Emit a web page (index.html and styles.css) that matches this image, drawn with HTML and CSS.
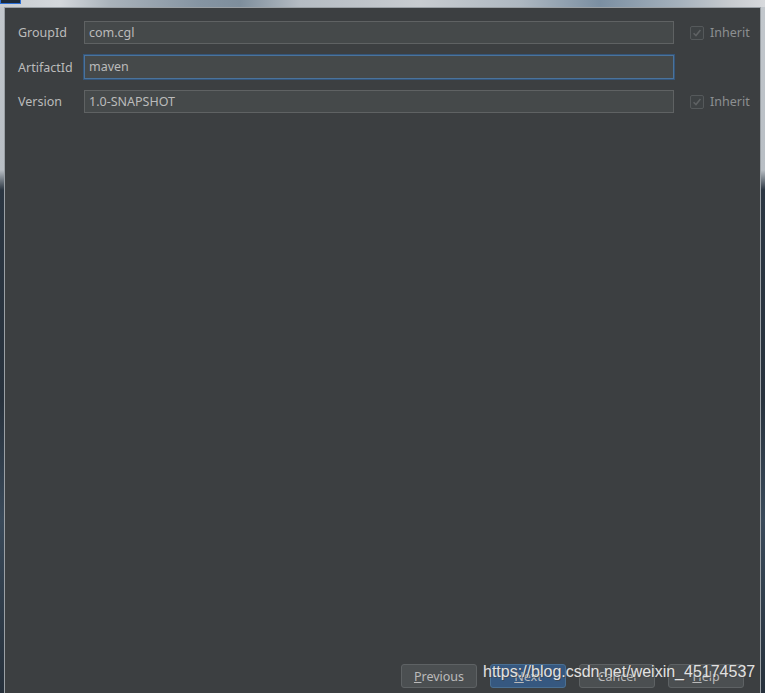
FILE: index.html
```html
<!DOCTYPE html>
<html>
<head>
<meta charset="utf-8">
<link rel="stylesheet" href="styles.css">
</head>
<body>
<div class="topstrip"><span class="tab"></span></div>
<div class="dialog">
  <div class="form">
    <label class="lbl">GroupId</label>
    <div class="field">com.cgl</div>
    <div class="inherit"><span class="cb"><svg viewBox="0 0 14 14" width="14" height="14"><path d="M3 7.2 L5.8 10 L11 3.6" fill="none" stroke="#5f6264" stroke-width="1.8"/></svg></span>Inherit</div>

    <label class="lbl">ArtifactId</label>
    <div class="field focused">maven</div>
    <div class="inherit empty"></div>

    <label class="lbl">Version</label>
    <div class="field">1.0-SNAPSHOT</div>
    <div class="inherit"><span class="cb"><svg viewBox="0 0 14 14" width="14" height="14"><path d="M3 7.2 L5.8 10 L11 3.6" fill="none" stroke="#5f6264" stroke-width="1.8"/></svg></span>Inherit</div>
  </div>
  <div class="spacer"></div>
  <div class="footer">
    <button class="btn"><u>P</u>revious</button>
    <button class="btn primary"><u>N</u>ext</button>
    <button class="btn">Cancel</button>
    <button class="btn"><u>H</u>elp</button>
  </div>
</div>
<div class="watermark">https://blog.csdn.net/weixin_45174537</div>
</body>
</html>
```

FILE: styles.css
```css
html, body {
  margin: 0;
  padding: 0;
  width: 765px;
  height: 693px;
  overflow: hidden;
}
body {
  position: relative;
  font-family: "Noto Sans", "Liberation Sans", sans-serif;
  font-size: 12.5px;
  background:
    linear-gradient(to bottom, #c3c8cd 0px, #b8bec4 170px, #2b3642 190px, #28323d 400px, #3a4a5a 520px, #26303b 693px);
}
.topstrip {
  height: 7px;
  background: linear-gradient(to right, #c9cdd1 0px, #d4d8dc 60px, #aab3bb 110px, #8594a2 200px, #7e8e9c 240px, #b5bcc3 300px, #c8ccd0 420px, #aeb8c1 520px, #7b8fa2 600px, #a6b2bd 680px, #c7cbcf 730px, #d8dadd 765px);
  position: relative;
}
.tab {
  position: absolute;
  left: 0;
  top: 0;
  width: 19px;
  height: 3px;
  background: #1e2b3a;
  border: 1px solid #2b6fd6;
  border-top: none;
}
.dialog {
  margin-left: 4px;
  width: 755px;
  height: 685px;
  border: 1px solid #9aa0a5;
  border-bottom: none;
  background: #3c3f41;
  display: flex;
  flex-direction: column;
}
.form {
  display: grid;
  grid-template-columns: 66px 590px auto;
  column-gap: 0;
  row-gap: 11px;
  padding: 13px 0 0 13px;
  align-items: center;
}
.lbl {
  color: #bbbbbb;
  line-height: 23px;
}
.field {
  height: 21px;
  line-height: 21px;
  border: 1px solid #5f6263;
  background: #45494a;
  color: #bbbbbb;
  padding-left: 4px;
  box-sizing: content-box;
  width: 584px;
}
.field.focused {
  border-color: #4a739c;
  box-shadow: 0 0 0 1px #34557a;
  height: 22px;
  line-height: 22px;
}
.inherit {
  display: flex;
  align-items: center;
  color: #8c8f91;
  gap: 6px;
  margin-left: 16px;
}
.cb {
  width: 12px;
  height: 12px;
  border: 1px solid #55595b;
  border-radius: 2px;
  background: #3e4244;
  display: inline-flex;
  align-items: center;
  justify-content: center;
}
.cb svg {
  width: 12px;
  height: 12px;
}
.spacer {
  flex: 1;
}
.footer {
  display: flex;
  justify-content: flex-end;
  gap: 13px;
  padding: 0 16px 5px 0;
}
.btn {
  width: 76px;
  height: 24px;
  font-family: "Noto Sans", "Liberation Sans", sans-serif;
  font-size: 12.5px;
  color: #bbbbbb;
  background: #4b4f51;
  border: 1px solid #5e6264;
  border-radius: 3px;
  padding: 0;
}
.btn.primary {
  background: #365880;
  border-color: #4a6f92;
  color: #bbbbbb;
}
.watermark {
  position: absolute;
  left: 483px;
  top: 663px;
  font-family: "Liberation Sans", sans-serif;
  font-size: 16px;
  color: rgba(240, 240, 240, 0.92);
  text-shadow: 0 0 1px #555, 1px 1px 0 rgba(60,60,60,0.6);
  white-space: nowrap;
}
```
